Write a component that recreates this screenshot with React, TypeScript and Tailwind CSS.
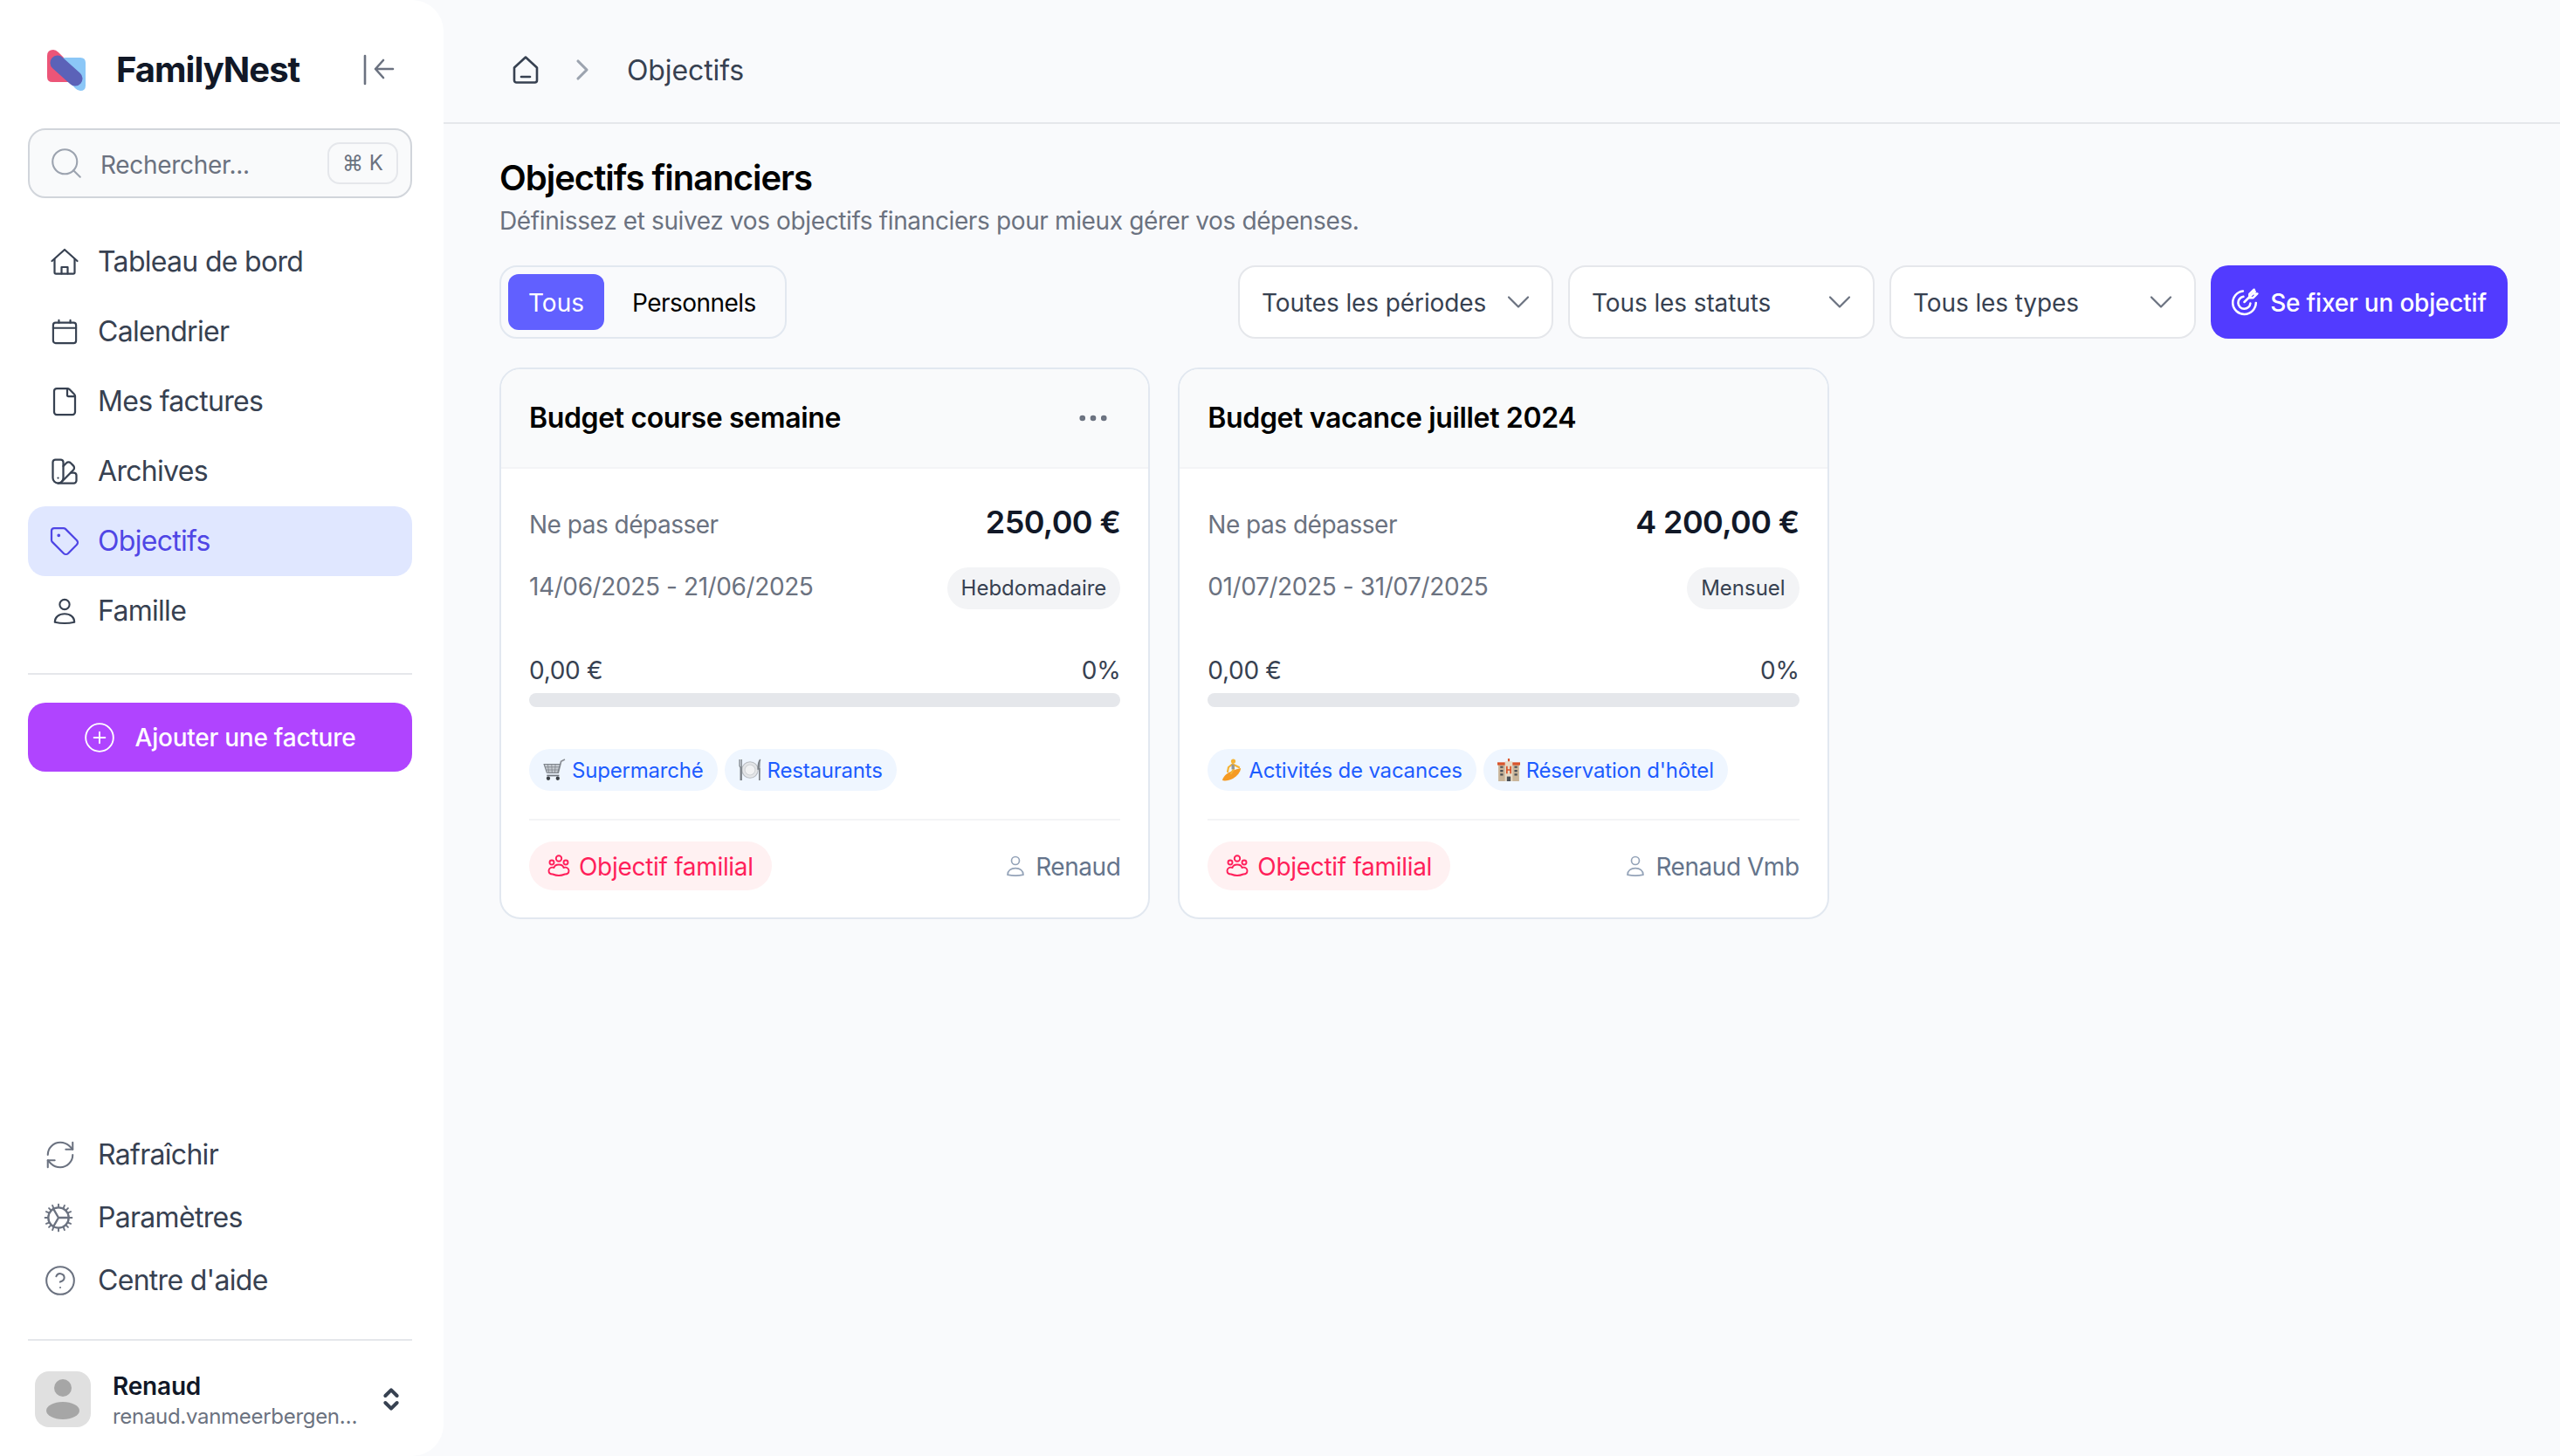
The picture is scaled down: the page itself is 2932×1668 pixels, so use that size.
import React from "react";
import { Search, File as FileIcon, SwatchBook, Tag, RefreshCw, CircleHelp, ChevronDown, ChevronRight, ChevronsUpDown, Ellipsis, CirclePlus } from "lucide-react";

const Inter = "font-['Inter',sans-serif]";

function HomeIcon({ className }: { className?: string }) {
  return (
    <svg viewBox="0 0 32 32" fill="none" stroke="currentColor" strokeWidth="2.2" strokeLinecap="round" strokeLinejoin="round" className={className}>
      <path d="M1.5 15 16 2l14.5 13" />
      <path d="M4.5 13v15a1.6 1.6 0 0 0 1.6 1.6h19.8a1.6 1.6 0 0 0 1.6-1.6V13" />
      <path d="M12.5 29.5v-7.5h7v7.5" />
    </svg>
  );
}
function CalendarIcon({ className }: { className?: string }) {
  return (
    <svg viewBox="0 0 32 32" fill="none" stroke="currentColor" strokeWidth="2.3" strokeLinecap="round" strokeLinejoin="round" className={className}>
      <rect x="2" y="5" width="28" height="25" rx="3" />
      <path d="M2 11.5h28M9 2v3M23 2v3" />
    </svg>
  );
}
function PersonIcon({ className }: { className?: string }) {
  return (
    <svg viewBox="0 0 32 32" fill="none" stroke="currentColor" strokeWidth="2.2" strokeLinecap="round" strokeLinejoin="round" className={className}>
      <circle cx="16" cy="8" r="6" />
      <path d="M4 29.5c0-6 5-10 12-10s12 4 12 10c-7 1.6-17 1.6-24 0Z" />
    </svg>
  );
}
function GearIcon({ className }: { className?: string }) {
  return (
    <svg viewBox="0 0 32 32" fill="none" stroke="currentColor" strokeWidth="2.2" strokeLinecap="round" strokeLinejoin="round" className={className}>
      <circle cx="16" cy="16" r="11" />
      <path d="M16 16 10.5 6.5M16 16l11 0M16 16l-5.5 9.5" />
      <path d="M16 1.5v3.5M16 27v3.5M1.5 16H5M27 16h3.5M5.7 5.7 8.2 8.2M23.8 23.8l2.5 2.5M5.7 26.3l2.5-2.5M23.8 8.2l2.5-2.5M9.5 2.8l1 2.4M21.5 26.8l1 2.4M2.8 22.5l2.4-1M26.8 10.5l2.4-1M2.8 9.5l2.4 1M26.8 21.5l2.4 1M9.5 29.2l1-2.4M21.5 5.2l1-2.4" strokeWidth="1.8" />
    </svg>
  );
}
function CollapseIcon() {
  return (
    <svg width="36" height="36" viewBox="0 0 36 36" fill="none" stroke="#6b7280" strokeWidth="2.6" strokeLinecap="round" strokeLinejoin="round" className="shrink-0">
      <path d="M2 2v32" />
      <path d="M14 17h20M23 7 14 17l9 10" />
    </svg>
  );
}
function Logo() {
  return (
    <svg width="44" height="47" viewBox="0 0 44 47" className="shrink-0">
      <path d="M0 7Q0 0 7 0 10 0 13 3L35 25V37H6Q0 37 0 31Z" fill="#ec5578" />
      <path d="M19 9H38Q44 9 44 15V41Q44 47 38 47 35 47 32 44L10 20Z" fill="#8bc7f7" />
      <rect x="0" y="15.500" width="44" height="17" rx="8.500" transform="rotate(42 22 24)" fill="#5b62b8" />
    </svg>
  );
}
function TargetIcon({ className }: { className?: string }) {
  return (
    <svg viewBox="0 0 32 32" fill="none" stroke="currentColor" strokeWidth="2.4" strokeLinecap="round" strokeLinejoin="round" className={className}>
      <path d="M14 4.2A12.5 12.5 0 1 0 28 17" />
      <path d="M14.5 10.2A6.6 6.6 0 1 0 22 17.5" />
      <path d="M15.5 16 27 4.5" />
      <path d="M21 7.5v4h4l4.5-4.5h-3.5V2.5Z" />
    </svg>
  );
}
function FamilyIcon({ className }: { className?: string }) {
  return (
    <svg viewBox="0 0 26 26" fill="none" stroke="currentColor" strokeWidth="1.9" strokeLinecap="round" strokeLinejoin="round" className={className}>
      <circle cx="13" cy="4.500" r="3.200" />
      <circle cx="5" cy="9" r="2.500" />
      <circle cx="21" cy="9" r="2.500" />
      <path d="M13 11.500c-3 0-5 1.500-5.500 3.500-3-1-6 .5-6 3.500 0 2.500 2 4 4.500 4 2 .8 4.500 1.500 7 1.500s5-.7 7-1.500c2.500 0 4.500-1.500 4.500-4 0-3-3-4.500-6-3.500-.5-2-2.500-3.500-5.500-3.500Z" />
    </svg>
  );
}
function CartEmoji() {
  return (
    <svg width="26" height="26" viewBox="0 0 24 24" className="shrink-0">
      <path d="M23 1 19 3 16 15H6" fill="none" stroke="#8a8f96" strokeWidth="1.6" />
      <path d="M1 6h17l-2.500 9H4Z" fill="#c5cad0" stroke="#7d838a" strokeWidth="1" />
      <path d="M5 6l1 9M9 6l.5 9M13 6l-.5 9M2 9h15M3 12h13" stroke="#7d838a" strokeWidth=".7" />
      <path d="M4 18h13" stroke="#6f757c" strokeWidth="1.600" />
      <circle cx="5.500" cy="21" r="2" fill="#3a3f45" />
      <circle cx="15.500" cy="21" r="2" fill="#3a3f45" />
    </svg>
  );
}
function PlateEmoji() {
  return (
    <svg width="26" height="26" viewBox="0 0 24 24" className="shrink-0">
      <circle cx="12" cy="12" r="8.500" fill="#e4e6e8" stroke="#b9bdc2" />
      <circle cx="12" cy="12" r="5.500" fill="#f1f2f3" stroke="#cfd2d5" />
      <path d="M1 1v7l1 1.500V23M3 1v22" stroke="#7c8288" strokeWidth="1.200" fill="none" />
      <path d="M23 1c-2 2-2.500 6-2.500 10H22V23" stroke="#7c8288" strokeWidth="1.500" fill="#8f959b" />
    </svg>
  );
}
function SurfEmoji() {
  return (
    <svg width="24" height="28" viewBox="0 0 24 26" className="shrink-0">
      <path d="M1 25c1-6 8-10 14-12 3-1 6-2 7-2 0 4-4 9-9 12-4 2-9 3-12 2Z" fill="#f59a23" />
      <circle cx="13.500" cy="3" r="2.600" fill="#f5b335" />
      <path d="M13 6 8 10l-1 5M13 6l1 6-3 5M14 7l6 3" stroke="#f5b335" strokeWidth="2.200" fill="none" strokeLinecap="round" />
      <path d="M11.500 6.500l3 .5.500 5-3.500.5Z" fill="#8f959b" />
    </svg>
  );
}
function HotelEmoji() {
  return (
    <svg width="26" height="26" viewBox="0 0 24 24" className="shrink-0">
      <rect x="1" y="5" width="22" height="19" fill="#c9b59a" />
      <rect x="0" y="4" width="24" height="3" fill="#d9542b" />
      <rect x="8" y="3" width="8" height="21" fill="#e8dcc8" />
      <path d="M11 0h2v3h-2Z" fill="#d9542b" />
      <path d="M10 8v8M14 8v8M10 12h4" stroke="#d9542b" strokeWidth="1.600" />
      <path d="M3 9h3M3 13h3M3 17h3M18 9h3M18 13h3M18 17h3" stroke="#4a4f55" strokeWidth="2" />
      <rect x="10" y="19" width="4" height="5" fill="#4a4f55" />
    </svg>
  );
}

const navItems: { label: string; icon: React.ReactNode; active?: boolean }[] = [
  { label: "Tableau de bord", icon: <HomeIcon className="w-[32px] h-[32px]" /> },
  { label: "Calendrier", icon: <CalendarIcon className="w-[30px] h-[30px]" /> },
  { label: "Mes factures", icon: <FileIcon size={36} strokeWidth={1.5} /> },
  { label: "Archives", icon: <SwatchBook size={36} strokeWidth={1.5} /> },
  { label: "Objectifs", icon: <Tag size={36} strokeWidth={1.5} />, active: true },
  { label: "Famille", icon: <PersonIcon className="w-[30px] h-[32px]" /> },
];

function Sidebar() {
  return (
    <aside className="w-[508px] h-[1668px] shrink-0 bg-white rounded-r-[36px] flex flex-col pl-[32px] pr-[36px]">
      <div className="h-[147px] flex items-center pl-[22px] pr-[20px] pt-[13px]">
        <Logo />
        <span className="ml-[35px] text-[40px] leading-[48px] font-bold tracking-[-1px] text-[#111827]">FamilyNest</span>
        <div className="ml-auto"><CollapseIcon /></div>
      </div>
      <div className="h-[80px] border-2 border-[#d1d5db] rounded-[20px] bg-[#f9fafb] flex items-center pl-[21px] pr-[14px]">
        <Search size={42} strokeWidth={1.2} className="text-[#9ca3af] shrink-0" />
        <span className="ml-[18px] mt-[4px] text-[28px] tracking-[-0.3px] text-[#6b7280]">Rechercher...</span>
        <span className="ml-auto w-[81px] h-[48px] border-2 border-[#e5e7eb] rounded-[14px] flex items-center justify-center text-[24px] text-[#6b7280]">⌘ K</span>
      </div>
      <nav className="mt-[33px] flex flex-col">
        {navItems.map((n) => (
          <div key={n.label} className={`h-[80px] rounded-[20px] flex items-center ${n.active ? "bg-[#e0e7ff] text-[#4f46e5]" : "text-[#374151]"}`}>
            <span className="w-[80px] shrink-0 flex items-center justify-center pl-[4px]">{n.icon}</span>
            <span className="text-[32px] leading-[40px] tracking-[-0.7px]">{n.label}</span>
          </div>
        ))}
      </nav>
      <div className="mt-[31px] h-[2px] bg-[#e5e7eb]" />
      <button className="mt-[32px] h-[79px] rounded-[20px] bg-[#b044ff] text-white flex items-center justify-center gap-[22px] text-[28px] font-medium tracking-[-0.25px] pr-[2px]">
        <CirclePlus size={38} strokeWidth={1.2} />
        <span>Ajouter une facture</span>
      </button>
      <div className="mt-auto flex flex-col">
        {[
          { label: "Rafraîchir", icon: <RefreshCw size={38} strokeWidth={1.3} /> },
          { label: "Paramètres", icon: <GearIcon className="w-[34px] h-[34px]" /> },
          { label: "Centre d'aide", icon: <CircleHelp size={38} strokeWidth={1.3} /> },
        ].map((n) => (
          <div key={n.label} className="h-[72px] flex items-center">
            <span className="w-[80px] shrink-0 flex items-center pl-[18px] text-[#6b7280]">{n.icon}</span>
            <span className="text-[32px] leading-[40px] tracking-[-0.7px] text-[#374151]">{n.label}</span>
          </div>
        ))}
      </div>
      <div className="mt-[31px] h-[2px] bg-[#e5e7eb]" />
      <div className="mt-[35px] mb-[27px] flex items-start pl-[8px] pr-[8px]">
        <div className="w-[64px] h-[64px] rounded-[16px] bg-[#e0e0e0] overflow-hidden flex flex-col items-center shrink-0">
          <div className="mt-[9px] w-[20px] h-[20px] rounded-full bg-[#a6a6a6]" />
          <div className="mt-[6px] w-[38px] h-[20px] rounded-[50%] bg-[#a6a6a6]" />
        </div>
        <div className="ml-[25px] flex flex-col min-w-0 flex-1">
          <span className="text-[28px] leading-[34px] font-semibold tracking-[-0.2px] text-[#111827]">Renaud</span>
          <span className="text-[24px] leading-[36px] tracking-[-0.3px] text-[#6b7280] truncate">renaud.vanmeerbergen@gmail.com</span>
        </div>
        <ChevronsUpDown size={32} strokeWidth={3} className="text-[#374151] shrink-0 ml-[12px] mt-[16px]" />
      </div>
    </aside>
  );
}

function Select({ label, w }: { label: string; w: string }) {
  return (
    <div className={`${w} h-[84px] bg-white border-2 border-[#e5e7eb] rounded-[20px] flex items-center justify-between pl-[25px] pr-[16px] text-[28px] tracking-[-0.1px] text-[#374151]`}>
      <span className="mt-[1px]">{label}</span>
      <ChevronDown size={44} strokeWidth={1.2} className="text-[#6b7280]" />
    </div>
  );
}

function Card({ title, menu, amount, dates, period, chips, owner }: {
  title: string; menu?: boolean; amount: string; dates: string; period: string;
  chips: { icon: React.ReactNode; label: string }[]; owner: string;
}) {
  return (
    <div className="bg-white border-2 border-[#e2e8f0] rounded-[24px] overflow-hidden">
      <div className="h-[112px] bg-[#f9fafb] border-b-2 border-[#f3f4f6] flex items-center justify-between px-[32px] box-content">
        <span className="text-[32px] leading-[40px] font-semibold tracking-[-0.36px] text-black">{title}</span>
        {menu && <Ellipsis size={42} strokeWidth={1.8} className="text-[#6b7280] mr-[10px]" />}
      </div>
      <div className="px-[32px] pt-[42px] pb-[31px]">
        <div className="flex items-center justify-between h-[40px]">
          <span className="text-[28px] tracking-[-0.5px] text-[#6b7280] mt-[4px]">Ne pas dépasser</span>
          <span className="text-[36px] font-semibold tracking-[-0.6px] text-[#111827] mt-[-2px]">{amount}</span>
        </div>
        <div className="mt-[31px] flex items-start justify-between h-[48px]">
          <span className="mt-[2px] text-[28px] leading-[40px] tracking-[-0.4px] text-[#6b7280]">{dates}</span>
          <span className="h-[48px] rounded-full bg-[#f3f4f6] px-[16px] flex items-center text-[24px] text-[#374151]">{period}</span>
        </div>
        <div className="mt-[50px] flex justify-between text-[28px] leading-[40px] tracking-[-0.3px] text-[#374151]">
          <span>0,00 €</span>
          <span>0%</span>
        </div>
        <div className="mt-[6px] h-[16px] rounded-full bg-[#e5e7eb]" />
        <div className="mt-[48px] flex gap-[8px]">
          {chips.map((c) => (
            <span key={c.label} className="h-[48px] rounded-full bg-[#eff6ff] px-[16px] flex items-center gap-[7px] text-[24px] tracking-[-0.2px] text-[#1d5cff]">
              {c.icon}<span className="mt-[2px]">{c.label}</span>
            </span>
          ))}
        </div>
        <div className="mt-[32px] h-[2px] bg-[#f3f4f6]" />
        <div className="mt-[24px] flex items-center justify-between">
          <span className="h-[56px] rounded-full bg-[#fff1f2] px-[21px] flex items-center gap-[10px] text-[28px] tracking-[-0.3px] text-[#ff1f5a]">
            <FamilyIcon className="w-[26px] h-[26px]" /><span className="mt-[2px]">Objectif familial</span>
          </span>
          <span className="flex items-center gap-[11px] text-[28px] tracking-[-0.45px] text-[#64748b]">
            <PersonIcon className="w-[24px] h-[26px] text-[#94a3b8]" /><span className="mt-[2px]">{owner}</span>
          </span>
        </div>
      </div>
    </div>
  );
}

export default function App() {
  return (
    <div className={`w-[2932px] h-[1668px] bg-[#f9fafc] flex overflow-hidden ${Inter}`}>
      <Sidebar />
      <main className="flex-1 min-w-0 flex flex-col">
        <header className="h-[142px] border-b-2 border-[#e5e7eb] flex items-center pl-[78px] pt-[20px]">
          <svg width="32" height="32" viewBox="0 0 32 32" fill="none" stroke="#374151" strokeWidth="2.6" strokeLinecap="round" strokeLinejoin="round">
            <path d="M3 13.500 16 1.500l13 12V28a2.500 2.500 0 0 1-2.500 2.500h-21A2.500 2.500 0 0 1 3 28Z" />
            <path d="M11 24h10" />
          </svg>
          <ChevronRight size={40} strokeWidth={1.9} className="text-[#9ca3af] ml-[29px]" />
          <span className="ml-[31px] mt-[2px] text-[32px] leading-[40px] tracking-[-0.1px] text-[#374151]">Objectifs</span>
        </header>
        <div className="pl-[64px] pr-[60px] pt-[38px]">
          <h1 className="text-[40px] leading-[48px] font-semibold tracking-[-1px] text-black">Objectifs financiers</h1>
          <p className="mt-[3px] text-[28px] leading-[44px] tracking-[-0.37px] text-[#6b7280]">Définissez et suivez vos objectifs financiers pour mieux gérer vos dépenses.</p>
          <div className="mt-[29px] flex items-center">
            <div className="h-[84px] border-2 border-[#e2e8f0] rounded-[20px] flex items-center pl-[8px] pr-[33px]">
              <span className="h-[64px] w-[110px] rounded-[12px] bg-[#6160ff] text-white text-[28px] flex items-center justify-center"><span className="mt-[1px]">Tous</span></span>
              <span className="ml-[32px] mt-[1px] text-[28px] tracking-[-0.55px] text-black">Personnels</span>
            </div>
            <div className="ml-auto flex items-center gap-[17px]">
              <Select label="Toutes les périodes" w="w-[361px]" />
              <Select label="Tous les statuts" w="w-[351px]" />
              <Select label="Tous les types" w="w-[351px]" />
              <button className="w-[340px] h-[84px] rounded-[20px] bg-[#523bff] text-white text-[28px] font-medium tracking-[-0.2px] flex items-center justify-center gap-[12px] pr-[2px]">
                <TargetIcon className="w-[34px] h-[34px]" /><span className="mt-[1px]">Se fixer un objectif</span>
              </button>
            </div>
          </div>
          <div className="mt-[33px] grid grid-cols-3 gap-[32px]">
            <Card title="Budget course semaine" menu amount="250,00 €" dates="14/06/2025 - 21/06/2025" period="Hebdomadaire"
              chips={[{ icon: <CartEmoji />, label: "Supermarché" }, { icon: <PlateEmoji />, label: "Restaurants" }]} owner="Renaud" />
            <Card title="Budget vacance juillet 2024" amount="4 200,00 €" dates="01/07/2025 - 31/07/2025" period="Mensuel"
              chips={[{ icon: <SurfEmoji />, label: "Activités de vacances" }, { icon: <HotelEmoji />, label: "Réservation d'hôtel" }]} owner="Renaud Vmb" />
          </div>
        </div>
      </main>
    </div>
  );
}
